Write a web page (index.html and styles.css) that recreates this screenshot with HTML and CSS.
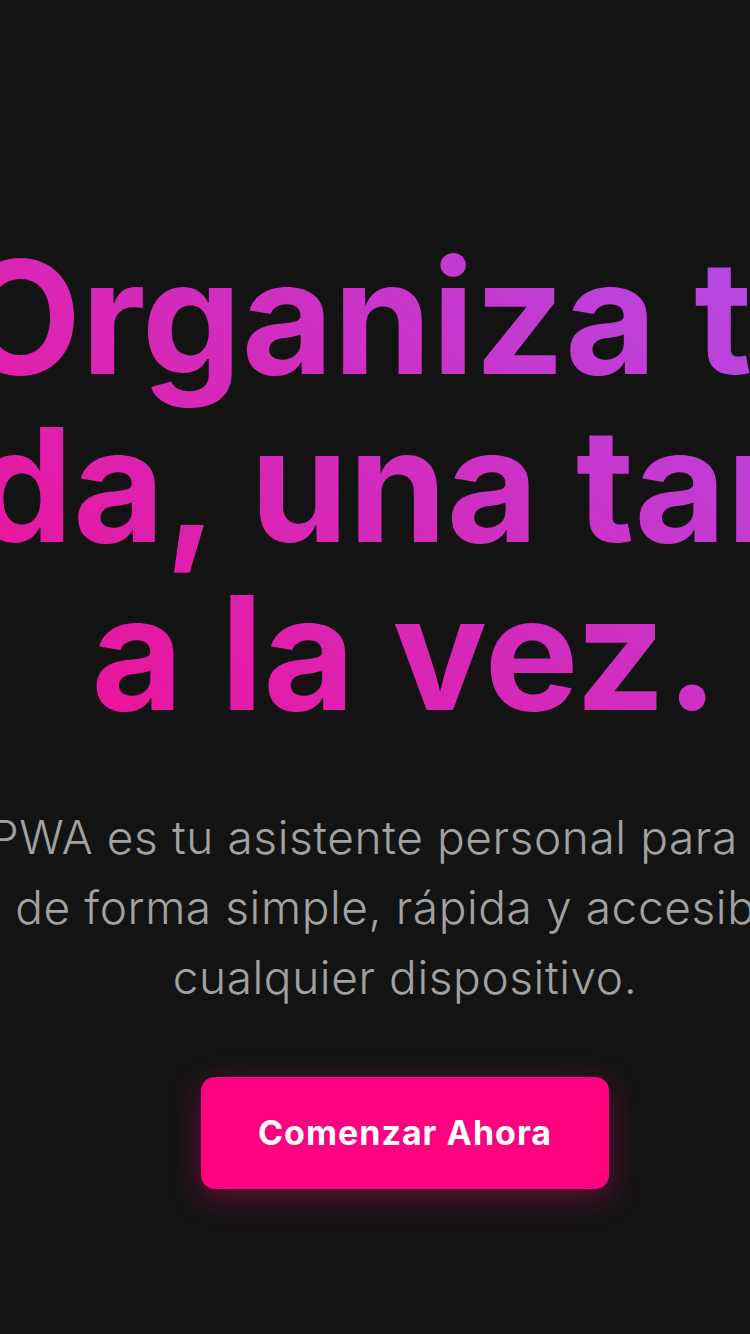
FILE: index.html
```html
<!DOCTYPE html>
<html lang="es">
<head>
<meta charset="utf-8">
<title>TaskPWA</title>
<link rel="stylesheet" href="styles.css">
</head>
<body>
<main class="hero">
  <h1 class="hero-title">Organiza tu<br>vida, una tarea<br>a la vez.</h1>
  <p class="hero-text">TaskPWA es tu asistente personal para ordenar<br>tareas de forma simple, rápida y accesible desde<br>cualquier dispositivo.</p>
  <button class="cta" type="button">Comenzar Ahora</button>
</main>
</body>
</html>
```
FILE: styles.css
```css
html, body {
  margin: 0;
  padding: 0;
  background: #131313;
  overflow: hidden;
}

body {
  font-family: "Inter", "Noto Sans", sans-serif;
  width: 750px;
  height: 1334px;
}

.hero {
  box-sizing: border-box;
  height: 1334px;
  padding: 233px 0 0 60px;
  display: flex;
  flex-direction: column;
  align-items: center;
}

.hero-title {
  flex: none;
  width: 1311px;
  margin: 0;
  font-size: 158px;
  line-height: 168px;
  font-weight: 700;
  letter-spacing: 0;
  text-align: center;
  white-space: nowrap;
  background: linear-gradient(45deg, #ff0080 -2.8%, #a855f7 97.2%);
  -webkit-background-clip: text;
  background-clip: text;
  color: transparent;
}

.hero-text {
  flex: none;
  margin: 65px 0 0;
  font-size: 46px;
  line-height: 70px;
  font-weight: 300;
  letter-spacing: 0.6px;
  color: #a2a2a2;
  text-align: center;
  white-space: nowrap;
}

.cta {
  margin-top: 65px;
  border: none;
  border-radius: 14px;
  background: #ff0080;
  color: #fff;
  font-family: "Inter", "Noto Sans", sans-serif;
  font-size: 34px;
  font-weight: 700;
  letter-spacing: 1px;
  line-height: 40px;
  padding: 36px 57px;
  box-shadow: 0 8px 30px rgba(255, 0, 128, 0.35);
  cursor: pointer;
}
```
